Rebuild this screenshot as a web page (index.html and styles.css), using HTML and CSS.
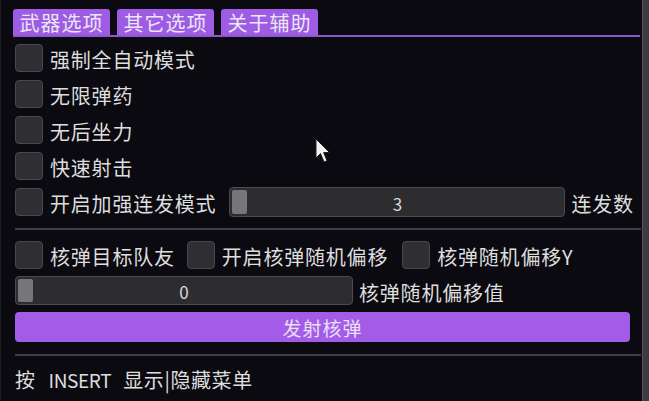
FILE: index.html
```html
<!DOCTYPE html>
<html lang="zh-CN">
<head>
    <meta charset="UTF-8">
    <title>辅助菜单</title>
    <link rel="stylesheet" href="styles.css">
</head>
<body>
    <div class="window">
        <!-- Tabs -->
        <div class="tabs">
            <div class="tab">武器选项</div>
            <div class="tab">其它选项</div>
            <div class="tab">关于辅助</div>
        </div>
        <div class="tab-line"></div>

        <!-- Weapon options -->
        <div class="list">
            <div class="row"><span class="check"></span><span class="label">强制全自动模式</span></div>
            <div class="row"><span class="check"></span><span class="label">无限弹药</span></div>
            <div class="row"><span class="check"></span><span class="label">无后坐力</span></div>
            <div class="row"><span class="check"></span><span class="label">快速射击</span></div>
            <div class="row">
                <span class="check"></span><span class="label">开启加强连发模式</span>
                <div class="slider slider-burst"><span class="grab"></span><span class="value">3</span></div>
                <span class="label slider-label">连发数</span>
            </div>
        </div>

        <div class="sep sep-mid"></div>

        <div class="row nuke-row">
            <span class="check"></span><span class="label gap-r">核弹目标队友</span>
            <span class="check"></span><span class="label gap-r2">开启核弹随机偏移</span>
            <span class="check"></span><span class="label">核弹随机偏移Y</span>
        </div>
        <div class="row slider-row">
            <div class="slider slider-offset"><span class="grab"></span><span class="value">0</span></div>
            <span class="label slider-label">核弹随机偏移值</span>
        </div>
        <div class="fire-btn">发射核弹</div>

        <div class="sep sep-foot"></div>
        <div class="footer">按<span class="key">INSERT</span>显示|隐藏菜单</div>

        <!-- mouse pointer over the menu -->
        <svg class="cursor" width="16" height="26" viewBox="0 0 16 26">
            <path d="M1 1 L1 20 L5.5 15.5 L9 24 L12 22.7 L8.6 14.5 L14.5 14.5 Z" fill="#f2f2f2" stroke="#222" stroke-width="1"/>
        </svg>
    </div>
</body>
</html>
```

FILE: styles.css
```css
/* General */
body {
    margin: 0;
    padding: 0;
    background: #3b3b45;
    font-family: "Noto Sans CJK SC", "Noto Sans", sans-serif;
    color: #dedede;
}

.window {
    position: relative;
    width: 643px;
    height: 401px;
    box-sizing: border-box;
    padding: 9px 0 0 14px;
    background: #0b0a10;
    border-left: 1px solid #1c1c24;
    border-right: 1px solid #55555f;
    display: flex;
    flex-direction: column;
}

/* Tabs */
.tabs {
    display: flex;
    gap: 7px;
    margin-left: -2px;
    height: 26px;
}

.tab {
    width: 97px;
    height: 26px;
    box-sizing: border-box;
    padding-top: 1px;
    background: #9d5ce3;
    border-radius: 3px 3px 0 0;
    font-size: 20px;
    line-height: 26px;
    letter-spacing: 1px;
    text-align: center;
    color: #ece6f4;
}

.tab-line {
    height: 2px;
    margin-left: -2px;
    width: 627px;
    background: #8e58d0;
}

/* Rows */
.list {
    display: flex;
    flex-direction: column;
    gap: 8px;
    margin-top: 7px;
}

.row {
    display: flex;
    align-items: center;
    height: 28px;
}

.check {
    width: 26px;
    height: 26px;
    flex: none;
    background: #2f2f33;
    border: 1px solid #47474c;
    border-radius: 4px;
}

.label {
    font-size: 20px;
    letter-spacing: 0.8px;
    line-height: 28px;
    margin-left: 7px;
    margin-top: 4px;
    white-space: nowrap;
}

.gap-r {
    margin-right: 12px;
}

.gap-r2 {
    margin-right: 14px;
}

/* Sliders */
.slider {
    position: relative;
    height: 28px;
    box-sizing: border-box;
    padding-top: 2px;
    background: #2d2d30;
    border: 1px solid #4a4a50;
    border-radius: 4px;
    display: flex;
    align-items: center;
    justify-content: center;
}

.slider-burst {
    width: 336px;
    height: 30px;
    margin-left: 13px;
}

.slider-offset {
    width: 338px;
    height: 29px;
}

.grab {
    position: absolute;
    left: 2px;
    top: 2px;
    bottom: 2px;
    width: 15px;
    background: #76767b;
    border-radius: 2px;
}

.value {
    font-size: 17px;
    color: #d8d8d8;
}

.slider-label {
    margin-left: 6px;
}

.sep {
    height: 2px;
    width: 626px;
    background: #3e3e44;
}

.sep-mid {
    margin-top: 12px;
}

.nuke-row {
    margin-top: 11px;
}

.slider-row {
    margin-top: 7px;
    height: 29px;
}

/* Fire button */
.fire-btn {
    width: 615px;
    height: 30px;
    margin-top: 7px;
    box-sizing: border-box;
    padding-top: 1px;
    background: #a25ce8;
    border-radius: 4px;
    font-size: 19px;
    line-height: 30px;
    letter-spacing: 1px;
    text-align: center;
    color: #ebe0f6;
}

.sep-foot {
    margin-top: 12px;
}

.footer {
    margin-top: 12px;
    font-size: 20px;
    letter-spacing: 0.6px;
    line-height: 24px;
}

.key {
    margin: 0 12px 0 13px;
    font-size: 19px;
    letter-spacing: -0.4px;
}

.cursor {
    position: absolute;
    left: 314px;
    top: 138px;
}
```
